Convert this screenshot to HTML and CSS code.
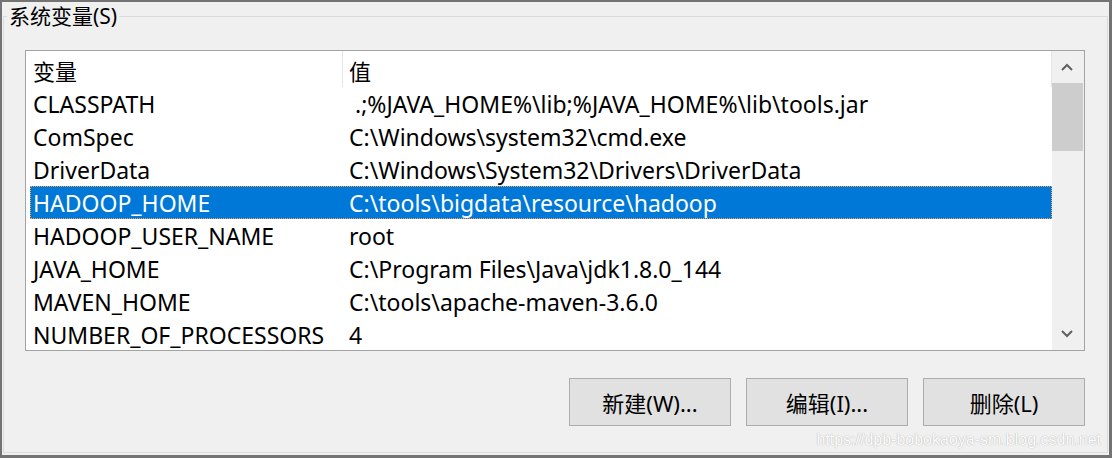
FILE: index.html
```html
<!DOCTYPE html>
<html lang="zh-CN">
<head>
<meta charset="utf-8">
<title>系统变量</title>
<link rel="stylesheet" href="styles.css">
</head>
<body>
<div class="frame">
  <fieldset class="group">
    <legend class="group-title">系统变量(S)</legend>
    <div class="listbox">
      <div class="list-main">
        <div class="list-head">
          <div class="cell head-cell name-col">变量</div>
          <div class="cell head-cell value-col">值</div>
        </div>
        <div class="row"><div class="cell name-col">CLASSPATH</div><div class="cell value-col pre"> .;%JAVA_HOME%\lib;%JAVA_HOME%\lib\tools.jar</div></div>
        <div class="row"><div class="cell name-col">ComSpec</div><div class="cell value-col">C:\Windows\system32\cmd.exe</div></div>
        <div class="row"><div class="cell name-col">DriverData</div><div class="cell value-col">C:\Windows\System32\Drivers\DriverData</div></div>
        <div class="row selected"><div class="cell name-col">HADOOP_HOME</div><div class="cell value-col">C:\tools\bigdata\resource\hadoop</div></div>
        <div class="row"><div class="cell name-col">HADOOP_USER_NAME</div><div class="cell value-col">root</div></div>
        <div class="row"><div class="cell name-col">JAVA_HOME</div><div class="cell value-col">C:\Program Files\Java\jdk1.8.0_144</div></div>
        <div class="row"><div class="cell name-col">MAVEN_HOME</div><div class="cell value-col">C:\tools\apache-maven-3.6.0</div></div>
        <div class="row"><div class="cell name-col">NUMBER_OF_PROCESSORS</div><div class="cell value-col">4</div></div>
      </div>
      <div class="scrollbar">
        <div class="sb-btn">
          <svg width="12" height="8" viewBox="0 0 12 8"><path d="M1 7 L6 2 L11 7" fill="none" stroke="#606060" stroke-width="2"/></svg>
        </div>
        <div class="sb-track"><div class="sb-thumb"></div></div>
        <div class="sb-btn">
          <svg width="12" height="8" viewBox="0 0 12 8"><path d="M1 1 L6 6 L11 1" fill="none" stroke="#606060" stroke-width="2"/></svg>
        </div>
      </div>
    </div>
    <div class="buttons">
      <button class="btn">新建(W)...</button>
      <button class="btn">编辑(I)...</button>
      <button class="btn">删除(L)</button>
    </div>
  </fieldset>
  <div class="watermark">https://dpb-bobokaoya-sm.blog.csdn.net</div>
</div>
</body>
</html>
```

FILE: styles.css
```css
* { box-sizing: border-box; }
html, body { margin: 0; padding: 0; }
body {
  width: 1112px;
  height: 458px;
  overflow: hidden;
  font-family: "Noto Sans", "Noto Sans CJK SC", sans-serif;
  color: #000;
}
.frame {
  position: relative;
  width: 1112px;
  height: 458px;
  background: #f0f0f0;
  border-style: solid;
  border-color: #737373;
  border-width: 2px 3px 3px 2px;
  display: flex;
}
.group {
  flex: 1;
  margin: 1px 1px 2px 1px;
  padding: 21px 22px 26px 21px;
  border: 1px solid #dcdcdc;
  min-width: 0;
  display: flex;
  flex-direction: column;
}
.group-title {
  margin-left: -18px;
  padding: 0 2px;
  font-size: 21px;
  line-height: 26px;
}
.listbox {
  height: 301px;
  border: 1px solid #a3a3a3;
  background: #fff;
  display: grid;
  grid-template-columns: 1fr 32px;
  overflow: hidden;
}
.list-main {
  padding-left: 4px;
  overflow: hidden;
  font-size: 23px;
}
.list-head {
  height: 36px;
  display: grid;
  grid-template-columns: 313px 1fr;
  border-right: 1px solid #e5e5e5;
}
.row {
  height: 33px;
  display: grid;
  grid-template-columns: 313px 1fr;
}
.cell {
  display: flex;
  align-items: center;
  white-space: nowrap;
  overflow: hidden;
}
.name-col { padding-left: 3px; }
.value-col { padding-left: 6px; }
.pre { white-space: pre; }
.head-cell.name-col { border-right: 1px solid #e5e5e5; }
.head-cell { padding-top: 2px; font-size: 22px; }
.row.selected {
  background: #0078d7;
  color: #fff;
  outline: 1px dotted #f0a050;
  outline-offset: -1px;
}
.scrollbar {
  background: #f0f0f0;
  display: flex;
  flex-direction: column;
}
.sb-btn {
  height: 32px;
  display: flex;
  align-items: center;
  justify-content: center;
  padding-right: 2px;
}
.sb-track {
  flex: 1;
  padding-right: 1px;
}
.sb-thumb {
  height: 68px;
  background: #cdcdcd;
}
.buttons {
  margin-top: 27px;
  display: flex;
  justify-content: flex-end;
  gap: 15px;
}
.btn {
  width: 162px;
  height: 48px;
  background: #e1e1e1;
  border: 1px solid #adadad;
  font-family: "Noto Sans", "Noto Sans CJK SC", sans-serif;
  font-size: 22px;
  color: #000;
  padding: 0;
}
.watermark {
  position: absolute;
  right: 8px;
  bottom: 6px;
  font-family: "Liberation Sans", Arial, sans-serif;
  font-size: 16px;
  color: #fcfcfc;
  text-shadow: 0 0 1px #b4b4b4, 0 0 1px #c8c8c8;
}
```
